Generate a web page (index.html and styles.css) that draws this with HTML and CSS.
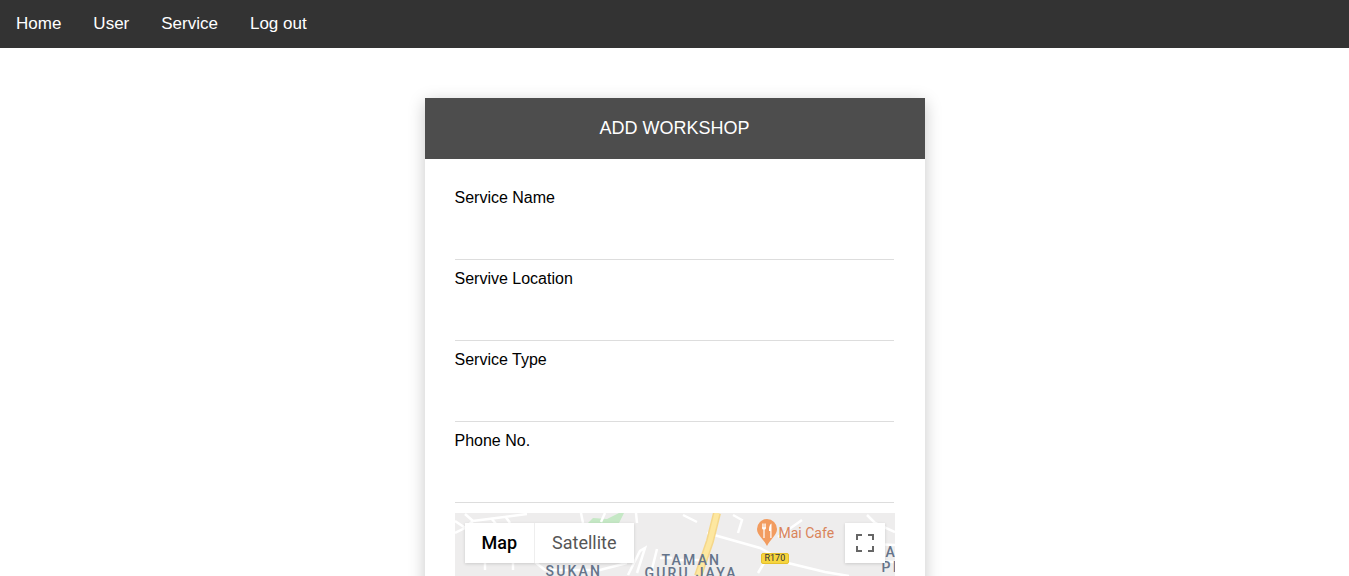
FILE: index.html
```html
<html>
<head>
	<title>Add Workshop</title>
	<link rel="stylesheet" href="styles.css">
</head>
<body>

	<ul class="topnav">
		<li><a href="#">Home</a></li>
		<li><a href="#">User</a></li>
		<li><a href="#">Service</a></li>
		<li><a href="#">Log out</a></li>
	</ul>

	<div class="card">
		<h2 class="card-title">ADD WORKSHOP</h2>
		<form class="card-form">
			<label class="field">Service Name<input type="text"></label>
			<label class="field">Servive Location<input type="text"></label>
			<label class="field">Service Type<input type="text"></label>
			<label class="field">Phone No.<input type="text"></label>

			<div class="map">
				<svg class="map-roads" width="440" height="63" viewBox="0 0 440 63">
					<path class="park" d="M130 13l8-8 14 1 12-6h5l-6 12h-33z"/>
					<g class="road">
						<path d="M0 20l10-5 8 -7 54-7M0 8l12 8M10 1l8 7M36 5l5 6M50 3l5 7"/>
						<path d="M30 50v7M58 50v7M80 49l10 8 55 0 27-7"/>
						<path d="M126 0l2 10M150 0l-4 9M181 0l1 10"/>
						<path d="M173 62l12-24 5-3-8 25M196 60l6-24M205 45h12M222 47h30"/>
						<path d="M228 2l14 7M278 2l9 5-4 13"/>
						<path d="M252 20l53 15 28 15 37 9 24 4M303 60l9-15M323 24l24-17"/>
						<path d="M412 2l8 8 20 9M394 30l46 2M400 47l40 2"/>
					</g>
					<path class="highway-edge" d="M262 0l-7 28-12 35"/>
					<path class="highway" d="M262 0l-7 28-12 35"/>
				</svg>

				<div class="map-type">
					<button type="button" class="map-btn map-btn-on">Map</button>
					<button type="button" class="map-btn">Satellite</button>
				</div>

				<svg class="poi-pin" width="20" height="27" viewBox="0 0 20 27">
					<path d="M10 0a10 10 0 0 1 10 10c0 3-1.500 5.500-4 8.500-2.500 3-4.500 5.500-6 8.500-1.500-3-3.500-5.500-6-8.500C1.500 15.500 0 13 0 10A10 10 0 0 1 10 0z" fill="#f29c5f"/>
					<path d="M5 4.500v4.200c0 1 .6 1.700 1.400 1.900V19h1.200v-8.400C8.400 10.400 9 9.700 9 8.700V4.500h-.7v3.700h-.7V4.500h-1.200v3.700h-.7V4.500zM14.500 4.500c-1.500.8-2.500 3-2.500 6v1.500h1.300v7h1.200z" fill="#fff"/>
				</svg>
				<span class="poi-name">Mai Cafe</span>
				<span class="shield">R170</span>

				<span class="area area-sukan">SUKAN</span>
				<span class="area area-taman">TAMAN</span>
				<span class="area area-guru">GURU JAYA</span>
				<span class="area area-ta">TA</span>
				<span class="area area-pi">PI</span>

				<button type="button" class="fullscreen" aria-label="Fullscreen">
					<svg width="18" height="18" viewBox="0 0 18 18">
						<path d="M0 6V0h6v2H2v4zM12 0h6v6h-2V2h-4zM18 12v6h-6v-2h4v-4zM6 18H0v-6h2v4h4z" fill="#666"/>
					</svg>
				</button>
			</div>
		</form>
	</div>

</body>
</html>
```

FILE: styles.css
```css
html {
	overflow: hidden;
}
body {
	padding: 0;
	margin: 0;
	background-color: #fff;
	font-family: "Liberation Sans", Arial, sans-serif;
}
.topnav {
	list-style-type: none;
	margin: 0;
	padding: 0;
	display: flex;
	background-color: #333;
}
.topnav a {
	display: block;
	padding: 14px 16px;
	color: #fff;
	font-size: 17px;
	line-height: 20px;
	text-decoration: none;
}
.card {
	width: 500px;
	margin: 50px auto 0;
	background-color: #fff;
	box-shadow: 0 4px 16px rgba(0, 0, 0, 0.22);
}
.card-title {
	margin: 0;
	padding: 20px 0;
	background-color: #4d4d4d;
	color: #fff;
	font-size: 18px;
	font-weight: normal;
	line-height: 21px;
	text-align: center;
}
.card-form {
	padding: 30px;
}
.field {
	display: block;
	font-size: 16px;
	line-height: 18px;
	color: #000;
}
.field input {
	display: block;
	width: 439px;
	height: 52px;
	margin: 0 0 10px;
	padding: 0;
	border: 0;
	border-bottom: 1px solid #ddd;
	outline: 0;
	box-sizing: content-box;
}
.map {
	position: relative;
	width: 440px;
	height: 300px;
	margin-top: 10px;
	background-color: #eeeded;
	overflow: hidden;
	font-family: Roboto, Arial, sans-serif;
}
.map-roads {
	display: block;
}
.park {
	fill: #c5e8c5;
}
.road {
	fill: none;
	stroke: #fff;
	stroke-width: 2.5;
}
.highway-edge {
	fill: none;
	stroke: #f5d78a;
	stroke-width: 8;
}
.highway {
	fill: none;
	stroke: #fde7a0;
	stroke-width: 5;
}
.map-type {
	position: absolute;
	top: 10px;
	left: 10px;
	display: flex;
	box-shadow: 0 1px 3px rgba(0, 0, 0, 0.15);
}
.map-btn {
	height: 40px;
	padding: 0 17px 2px;
	border: 0;
	background-color: #fff;
	color: #565656;
	font-family: Roboto, Arial, sans-serif;
	font-size: 18px;
}
.map-btn-on {
	color: #000;
	font-weight: 500;
	border-right: 1px solid #eee;
}
.fullscreen {
	position: absolute;
	top: 10px;
	right: 10px;
	width: 40px;
	height: 40px;
	padding: 0;
	border: 0;
	background-color: #fff;
	box-shadow: 0 1px 3px rgba(0, 0, 0, 0.15);
	display: flex;
	align-items: center;
	justify-content: center;
}
.poi-pin {
	position: absolute;
	top: 6px;
	left: 302px;
}
.poi-name {
	position: absolute;
	top: 12px;
	left: 324px;
	color: #d9845a;
	font-size: 14px;
	line-height: 16px;
}
.shield {
	position: absolute;
	top: 40px;
	left: 306px;
	padding: 0 3px;
	background-color: #f6d53f;
	border: 1px solid #e6c02c;
	border-radius: 2px;
	font-size: 9px;
	line-height: 9px;
	color: #333;
}
.area {
	position: absolute;
	color: #65748a;
	font-size: 14px;
	font-weight: 500;
	line-height: 16px;
	letter-spacing: 2.2px;
}
.area-sukan {
	top: 50px;
	left: 91px;
}
.area-taman {
	top: 39px;
	left: 207px;
}
.area-guru {
	top: 52px;
	left: 190px;
}
.area-ta {
	top: 31px;
	left: 421px;
}
.area-pi {
	top: 46px;
	left: 427px;
}
```
